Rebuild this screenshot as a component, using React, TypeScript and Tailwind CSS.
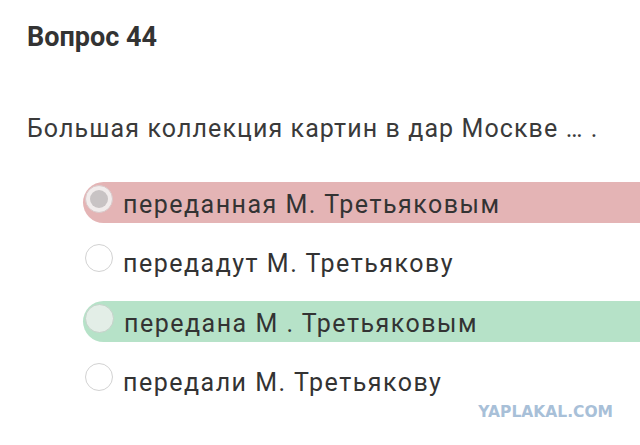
import React from 'react';

type Answer = {
    text: string;
    state: 'wrong' | 'right' | 'none';
};

const answers: Answer[] = [
    { text: 'переданная М. Третьяковым', state: 'wrong' },
    { text: 'передадут М. Третьякову', state: 'none' },
    { text: 'передана М . Третьяковым', state: 'right' },
    { text: 'передали М. Третьякову', state: 'none' },
];

const Radio: React.FC<{ state: Answer['state'] }> = ({ state }) => {
    if (state === 'wrong') {
        return (
            <span className="relative -top-[4px] flex h-[28px] w-[28px] shrink-0 items-center justify-center rounded-full border-[1.5px] border-[#d9c9ca] bg-[#f1ecec]">
                <span className="h-[18px] w-[18px] rounded-full bg-[#c8c3c4]" />
            </span>
        );
    }
    if (state === 'right') {
        return (
            <span className="relative -top-[3px] h-[29px] w-[29px] shrink-0 rounded-full border-[1.5px] border-[#c4d2c9] bg-[#e3eee7]" />
        );
    }
    return (
        <span className="relative -top-[4px] h-[28px] w-[28px] shrink-0 rounded-full border-[1.5px] border-[#d2d2d2] bg-white" />
    );
};

const AnswerRow: React.FC<{ answer: Answer }> = ({ answer }) => {
    const bg =
        answer.state === 'wrong'
            ? 'bg-[#e4b4b5]'
            : answer.state === 'right'
              ? 'bg-[#b6e2c8]'
              : '';

    return (
        <div className={`flex h-[41px] items-center rounded-l-full pl-[2px] ${bg}`}>
            <Radio state={answer.state} />
            <span className="ml-[10px] pt-[3px] text-[25px] leading-[41px] tracking-[1.5px] text-[#333]">
                {answer.text}
            </span>
        </div>
    );
};

export default function App() {
    return (
        <div className="relative flex h-[445px] w-[640px] flex-col overflow-hidden bg-white font-['Roboto',sans-serif]">
            <div className="flex flex-col gap-[60px] px-[27px] pt-[21px]">
                <h2 className="text-[27px] font-bold leading-[32px] text-[#333]">Вопрос 44</h2>
                <p className="text-[25px] leading-[32px] tracking-[1.1px] text-[#3a3a3a]">
                    Большая коллекция картин в дар Москве … .
                </p>
            </div>

            <div className="mt-[37px] flex flex-col gap-[18.5px] pl-[83px]">
                {answers.map((a) => (
                    <AnswerRow key={a.text} answer={a} />
                ))}
            </div>

            {/* site watermark */}
            <span className="absolute bottom-[24px] right-[27px] font-['DejaVu_Sans',sans-serif] text-[15.5px] font-bold leading-[18px] text-[#a8c0d8]">
                YAPLAKAL.COM
            </span>
        </div>
    );
}
